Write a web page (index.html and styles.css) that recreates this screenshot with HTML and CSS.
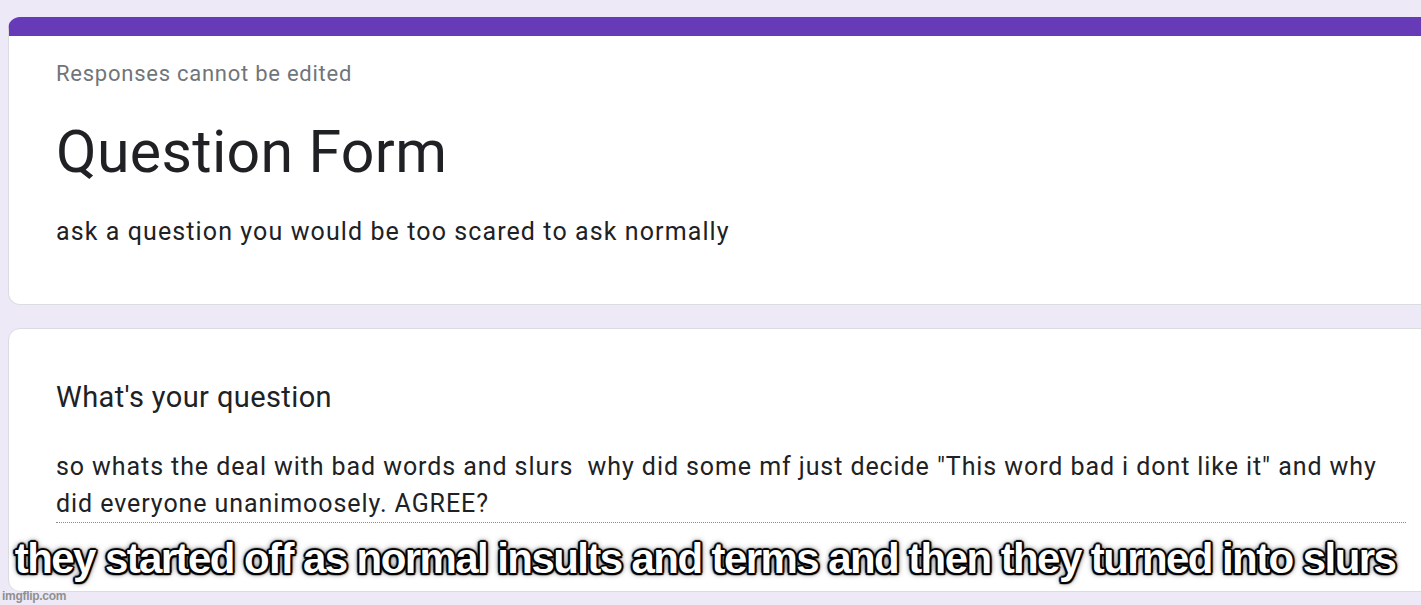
FILE: index.html
```html
<!DOCTYPE html>
<html>
<head>
<meta charset="utf-8">
<link rel="stylesheet" href="styles.css">
</head>
<body>
<div class="page">
  <section class="card header-card">
    <p class="note">Responses cannot be edited</p>
    <h1 class="title">Question Form</h1>
    <p class="desc">ask a question you would be too scared to ask normally</p>
  </section>
  <section class="card question-card">
    <h2 class="q-title">What's your question</h2>
    <div class="answer">so whats the deal with bad words and slurs&nbsp; why did some mf just decide "This word bad i dont like it" and why<br>did everyone unanimoosely. AGREE?</div>
  </section>
</div>
<div class="caption">they started off as normal insults and terms and then they turned into slurs</div>
<div class="watermark">imgflip.com</div>
</body>
</html>
```

FILE: styles.css
```css
html, body {
  margin: 0;
  padding: 0;
}
body {
  width: 1421px;
  height: 605px;
  overflow: hidden;
  background: #ede9f7;
  font-family: Roboto, "Liberation Sans", Arial, sans-serif;
  color: #202124;
  position: relative;
}
.page {
  padding: 17px 0 0 8px;
  display: flex;
  flex-direction: column;
  gap: 23px;
}
.card {
  width: 1460px;
  background: #fff;
  border: 1px solid #dadce0;
  border-radius: 12px;
  box-sizing: border-box;
}
.header-card {
  border-top: 19px solid #673ab7;
  padding: 24px 0 55px 47px;
  height: 288px;
}
.note {
  margin: 0;
  font-size: 22px;
  line-height: 28px;
  letter-spacing: 0.75px;
  color: #70757a;
}
.title {
  margin: 32px 0 0;
  font-weight: 400;
  font-size: 59px;
  line-height: 64px;
  letter-spacing: 0.35px;
}
.desc {
  margin: 32px 0 0;
  font-size: 25px;
  line-height: 32px;
  letter-spacing: 1.1px;
}
.question-card {
  height: 264px;
  padding: 50px 0 0 47px;
}
.q-title {
  margin: 0;
  font-weight: 400;
  font-size: 29px;
  line-height: 36px;
  letter-spacing: 0.4px;
}
.answer {
  margin-top: 33px;
  width: 1350px;
  font-size: 25px;
  line-height: 37px;
  letter-spacing: 0.92px;
  white-space: nowrap;
  border-bottom: 1px dotted #8a8a8a;
}
.caption {
  position: absolute;
  left: 0;
  width: 1410px;
  top: 535px;
  text-align: center;
  font-family: "Liberation Sans", Arial, sans-serif;
  font-weight: 700;
  font-size: 42px;
  line-height: 48px;
  letter-spacing: -1.58px;
  color: #fff;
  text-shadow: 2px 0 1px #000, -2px 0 1px #000, 0 2px 1px #000, 0 -2px 1px #000, 1.5px 1.5px 1px #000, -1.5px -1.5px 1px #000, 1.5px -1.5px 1px #000, -1.5px 1.5px 1px #000, 0 0 6px #000;
}
.watermark {
  position: absolute;
  left: 2px;
  top: 589px;
  font-family: "Liberation Sans", Arial, sans-serif;
  font-weight: 700;
  font-size: 12px;
  letter-spacing: -0.3px;
  color: #909090;
}
```
